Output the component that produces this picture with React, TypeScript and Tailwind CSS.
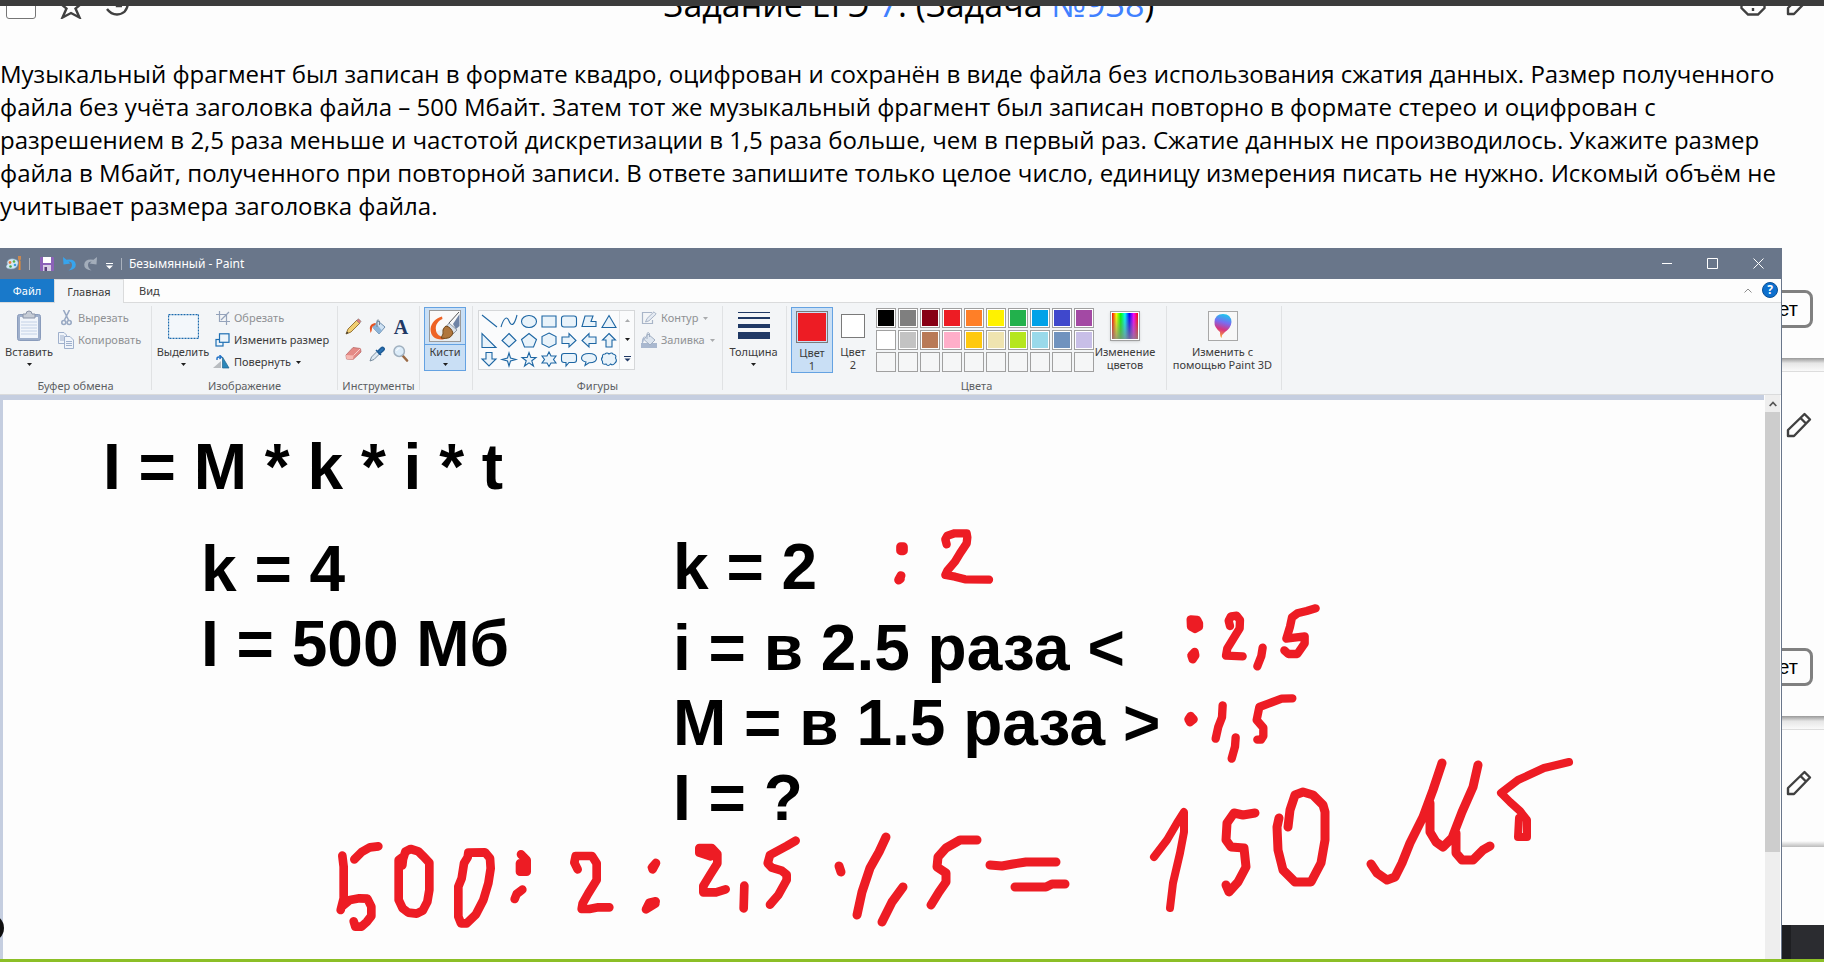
import React from "react";

type Kids = { children?: React.ReactNode };

const Caret = ({ muted = false }: { muted?: boolean }) => (
  <svg width="5" height="3" viewBox="0 0 5 3" className={muted ? "text-[#a9abad]" : "text-[#1e1e1e]"} aria-hidden="true">
    <path d="M0 0H5L2.5 3Z" fill="currentColor" />
  </svg>
);

const Pencil = () => (
  <svg width="26" height="26" viewBox="0 0 26 26" fill="none" stroke="#404040" strokeWidth="2.4" strokeLinejoin="round" aria-hidden="true">
    <path d="M2 24V18L18.5 2L24 7.5L8 24ZM14.5 6L20 11.5" />
  </svg>
);

const Group = ({ label, className, children }: Kids & { label?: string; className: string }) => (
  <section className={`flex shrink-0 ${className}`}>
    <div className="flex min-w-0 grow flex-col">
      <div className="flex h-[73px] pt-px">{children}</div>
      <div className="text-center leading-[13px] whitespace-nowrap text-[#5c5f63]">{label}</div>
    </div>
    <span className="mb-1 w-px shrink-0 bg-[#e0e2e4]" />
  </section>
);

const BigButton = ({ icon, lines, caret, className }: { icon: React.ReactNode; lines: string[]; caret?: boolean; className: string }) => (
  <button className={`flex h-[66px] shrink-0 flex-col items-center leading-[13px] text-[#3b3b3b] ${className}`}>
    <span className="flex h-[38px] items-center">{icon}</span>
    {lines.map((l) => (
      <span key={l} className="whitespace-nowrap">{l}</span>
    ))}
    {caret && <span className="mt-[5px] flex"><Caret /></span>}
  </button>
);

const Row = ({ icon, text, muted, caret }: { icon: React.ReactNode; text: string; muted?: boolean; caret?: boolean }) => (
  <button className={`flex h-[22px] items-center whitespace-nowrap ${muted ? "text-[#8f9194]" : "text-[#3b3b3b]"}`}>
    <span className="flex w-5 items-center">{icon}</span>
    {text}
    {caret && <span className="ml-[5px] flex"><Caret muted={muted} /></span>}
  </button>
);

const PasteIcon = () => (
  <svg width="26" height="32" viewBox="0 0 26 32" aria-hidden="true">
    <rect x="1.5" y="4.5" width="23" height="26" rx="2" fill="#9fb0cc" stroke="#8a9cbc" />
    <rect x="4" y="7" width="18" height="21" fill="#f1f5fb" />
    <path d="M5 12H21M5 15H21M5 18H21M5 21H21M5 24H21" stroke="#c3d1e6" />
    <path d="M7 8V4H10Q10 1 13 1T16 4H19V8Z" fill="#c6ccd6" stroke="#8a94a8" />
  </svg>
);
const CutIcon = () => (
  <svg width="16" height="16" viewBox="0 0 16 16" fill="none" stroke="#99a9c3" strokeWidth="1.6" className="ml-px" aria-hidden="true">
    <path d="M4.5 0L9.5 10M10.5 0L5.5 10" />
    <circle cx="4.8" cy="12.5" r="2" /><circle cx="10.2" cy="12.5" r="2" />
  </svg>
);
const CopyIcon = () => (
  <svg width="16" height="17" viewBox="0 0 16 17" fill="#f0f4fa" stroke="#9fb0cc" aria-hidden="true">
    <path d="M.5.5H6L8.5 3V11.5H.5Z" /><path d="M2 4H6M2 6H6M2 8H6" />
    <path d="M6.5 4.5H12L15.5 8V16.5H6.5Z" /><path d="M8 9.5H14M8 11.5H14M8 13.5H14" />
  </svg>
);
const SelectIcon = () => (
  <svg width="31" height="25" viewBox="0 0 31 25" aria-hidden="true">
    <rect x=".5" y=".5" width="30" height="24" fill="#f3f7fb" stroke="#1b6aae" strokeWidth="1.3" strokeDasharray="2 1" />
  </svg>
);
const CropIcon = () => (
  <svg width="14" height="14" viewBox="0 0 14 14" fill="none" stroke="#95a3bb" className="ml-[2px]" aria-hidden="true">
    <path d="M3.5 0V10.5H14M0 3.5H10.5V14M5 9L13 1" strokeWidth="1.2" />
  </svg>
);
const ResizeIcon = () => (
  <svg width="15" height="14" viewBox="0 0 15 14" fill="#eef5fb" stroke="#1e6fb3" strokeWidth="1.2" className="ml-px" aria-hidden="true">
    <rect x="1" y="6.5" width="7" height="6.5" /><rect x="4.5" y=".8" width="9.5" height="8.5" />
  </svg>
);
const RotateIcon = () => (
  <svg width="17" height="14" viewBox="0 0 17 14" className="-ml-px" aria-hidden="true">
    <path d="M0 13L8 6V13Z" fill="#b8bcc0" /><path d="M9.5 13V2L16 13Z" fill="#2b86b8" stroke="#1c6590" strokeWidth=".7" />
    <path d="M4 5V3.5Q4 2 6 2H8M6.5 0L8.5 2L6.5 4" fill="none" stroke="#2071c7" strokeWidth="1.4" />
  </svg>
);
const DrawPencil = () => (
  <svg width="17" height="17" viewBox="0 0 17 17" aria-hidden="true">
    <path d="M1 16L3 11L12 2L15 5L6 14Z" fill="#f2cf72" stroke="#8d6a2d" strokeWidth=".9" />
    <path d="M11.5 2.5L13.5.8L16 3.3L14.5 5.5Z" fill="#e07b78" stroke="#777" strokeWidth=".6" /><path d="M1 16L2 13.5L3.5 15Z" fill="#333" />
  </svg>
);
const Bucket = () => (
  <svg width="17" height="16" viewBox="0 0 17 16" aria-hidden="true">
    <path d="M9 2L16 8L10 15L4 8.5Z" fill="#cfe2f4" stroke="#6f8fae" /><path d="M7 4.5L13 11.5L10 15L4 8.5Z" fill="#8db4d8" />
    <path d="M8 8V1.5Q9 0 10.5 2V6" fill="none" stroke="#7b8794" /><path d="M6 4Q1 5 .8 9L1.5 14Q3 12 3.2 8L7 5Z" fill="#e6501f" />
  </svg>
);
const TextTool = () => <span className="w-4 text-center font-['Liberation_Serif',serif] text-[20px] leading-4 font-bold text-[#1f3864]">A</span>;
const Eraser = () => (
  <svg width="17" height="15" viewBox="0 0 17 15" aria-hidden="true">
    <path d="M1 9L8 1.5L15.5 2.5L16 6L8 13.5L1.5 13Z" fill="#e58a86" stroke="#b96a68" strokeWidth=".8" />
    <path d="M1 9L8.5 9.5L8 13.5L1.5 13Z" fill="#f7b9b3" /><path d="M8.5 9.5L15.5 2.5" stroke="#f8cfcb" />
  </svg>
);
const Dropper = () => (
  <svg width="16" height="16" viewBox="0 0 16 16" aria-hidden="true">
    <path d="M1 15L2.5 11L8 5.5L10.5 8L5 13.5Z" fill="#dfeaf3" stroke="#6d8295" strokeWidth=".9" />
    <path d="M7 4L12 9M8.5 5.5L12 2Q13.5.8 14.8 2T14 5L10.5 8Z" fill="#2a72b5" stroke="#1f5c96" strokeWidth="1.5" />
  </svg>
);
const Loupe = () => (
  <svg width="16" height="17" viewBox="0 0 16 17" aria-hidden="true">
    <path d="M9.5 10.5L14 15.5" stroke="#9a6a45" strokeWidth="2.6" strokeLinecap="round" />
    <circle cx="6.2" cy="6.2" r="5.2" fill="#dcecf9" stroke="#a0b0bf" strokeWidth="1.5" /><path d="M3.5 6Q4 3.5 6.5 3.5" fill="none" stroke="#fff" />
  </svg>
);
const BrushIcon = () => (
  <svg width="32" height="32" viewBox="0 0 32 32" aria-hidden="true">
    <rect x=".5" y=".5" width="31" height="31" fill="#fafafa" stroke="#9a9a9a" />
    <path d="M1 24L31 12V31H1Z" fill="#e9edf0" />
    <path d="M13 6.500C7 8 2 13 1.500 19C1.500 26 6 30 14 29.500L17 28C11 27 7 24 7 20C6 15 9 11 13.500 9Z" fill="#ee6325" />
    <path d="M24 14L30.5 4V16L27 19Z" fill="#6f84a6" /><path d="M20 13L30 2" stroke="#555" />
    <path d="M20 13L28 20L24 24L17 17Z" fill="#dbe2ea" stroke="#6b7885" strokeWidth=".7" />
    <path d="M17 16Q22 17 24 23Q22 30 12 28Q15 24 14 20Q15 17 17 16Z" fill="#b0763c" stroke="#704516" />
  </svg>
);
const OutlineIcon = () => (
  <svg width="16" height="14" viewBox="0 0 16 14" fill="none" stroke="#a9b5c8" aria-hidden="true">
    <path d="M11 1.5H1.5V12.5H11.5V9" strokeWidth="1.2" /><path d="M4.5 11L6 7.5L13 .8L15.2 3L8 9.8Z" fill="#e4eaf2" />
  </svg>
);
const FillIcon = () => (
  <svg width="16" height="16" viewBox="0 0 16 16" aria-hidden="true">
    <rect y="11" width="16" height="5" fill="#a9b8cf" /><path d="M7 2L14 8L9 13L3 7.5Z" fill="#dde5ef" stroke="#a0aec2" />
    <path d="M6 7V1.5Q7-.5 8.5 1.5V5" fill="none" stroke="#a0aec2" /><path d="M4 4Q0 6 1 12Q3 10 3 7Z" fill="#a9b8cf" />
  </svg>
);

const SHAPES: string[] = [
  "M1 2L16 14",
  "M0 14C3 4 6 3 8 8S13 14 16 2",
  "M8 2.5A7.5 6 0 1 1 8 14.5A7.5 6 0 1 1 8 2.5Z",
  "M1 3H15V14H1Z",
  "M3 3H13Q15.5 3 15.5 5.5V11.5Q15.5 14 13 14H3Q.5 14 .5 11.5V5.5Q.5 3 3 3Z",
  "M4 3H12L10 8.5H15V13.5H1Z",
  "M8 2.5L15 14.5H1Z",
  "M1 1.5V15.5H15Z",
  "M8 1.5L15 8.5L8 15L1 8.5Z",
  "M8 1.5L15.5 7.5L12.5 15H3.5L.5 7.5Z",
  "M8 1L15 4.5V12L8 15.5L1 12V4.5Z",
  "M1 5H8V1.5L15 8.5L8 15V11.5H1Z",
  "M15 5H8V1.5L1 8.5L8 15V11.5H15Z",
  "M8 1.5L14.5 8H11V15H5V8H1.5Z",
  "M5 1.5H11V8H15L8 15L1 8H5Z",
  "M8 2L9.5 7L15 8.5L9.5 10L8 15L6.5 10L1 8.5L6.5 7Z",
  "M8 1.5L9.8 6.5H15L10.8 9.8L12.5 15L8 11.8L3.5 15L5.2 9.8L1 6.5H6.2Z",
  "M8 1L10 5H15L12.5 8.5L15 12H10L8 15.5L6 12H1L3.5 8.5L1 5H6Z",
  "M3 2.5H13Q15.5 2.5 15.5 5V9Q15.5 11.5 13 11.5H8L5 15V11.5H3Q.5 11.5 .5 9V5Q.5 2.5 3 2.5Z",
  "M5 11Q.5 10 .5 7Q1 2.5 8 2.5T15.5 7T8 11.8L4 14.5Z",
  "M4 3Q6 1 8 3Q11 1 12 3Q16 4 14.5 7Q16.5 10 14 12Q12 15 9.5 13Q7 16 5 13Q1 14 1.5 10.5Q-.5 8 1.5 6Q1 3 4 3Z",
];

const PALETTE: string[][] = [
  ["#000000", "#7f7f7f", "#880015", "#ed1c24", "#ff7f27", "#fff200", "#22b14c", "#00a2e8", "#3f48cc", "#a349a4"],
  ["#ffffff", "#c3c3c3", "#b97a57", "#ffaec9", "#ffc90e", "#efe4b0", "#b5e61d", "#99d9ea", "#7092be", "#c8bfe7"],
];

const Palette = () => (
  <div className="mt-px ml-[3px] grid h-16 grid-cols-[repeat(10,20px)] grid-rows-[repeat(3,20px)] gap-[2px]">
    {PALETTE.flat().map((c) => (
      <button key={c} aria-label={c} className="border border-[#a0a0a0] bg-white p-px">
        <span className="block h-full" style={{ backgroundColor: c }} />
      </button>
    ))}
    {Array.from({ length: 10 }, (_, i) => (
      <button key={i} aria-label={`slot ${i + 1}`} className="border border-[#a0a0a0] bg-[#f5f6f7]" />
    ))}
  </div>
);

const TitleBar = () => (
  <header className="flex h-[31px] shrink-0 items-center bg-[#69768a] pl-[6px] text-[12px] text-white">
    <svg width="16" height="17" viewBox="0 0 16 17" aria-hidden="true">
      <path d="M1 7Q3 3 8 4Q13 5 12 9Q11 14 5 14Q0 14 0 11Q2 10 1 7Z" fill="#d3e8f4" stroke="#7fa3bd" strokeWidth=".6" />
      <circle cx="4" cy="7.5" r="1.4" fill="#ee7b3c" /><circle cx="8" cy="6.5" r="1.3" fill="#58b249" />
      <circle cx="9" cy="10" r="1.3" fill="#3c9be0" /><circle cx="4.5" cy="11.5" r="1.3" fill="#46a64b" />
      <path d="M12 1H15V4L14 6H13L12 4Z" fill="#c98952" /><path d="M13 6H14.5V15H12.5Z" fill="#f08c2e" />
    </svg>
    <span className="ml-[7px] h-3 w-px bg-[#a9b1bd]" />
    <button aria-label="Сохранить" className="ml-[10px]">
      <svg width="14" height="14" viewBox="0 0 14 14"><rect width="14" height="14" rx="1" fill="#8b62b8" /><rect x="3" width="8" height="6" fill="#fff" /><rect x="3" y="8" width="8" height="6" fill="#d8cfe5" /><rect x="4.5" y="10" width="2.5" height="4" fill="#59417b" /></svg>
    </button>
    <button aria-label="Отменить" className="ml-[9px]">
      <svg width="13" height="14" viewBox="0 0 13 14"><path d="M0 0L.5 7.5L7.5 6.5L5.3 4.6Q9 4.6 9 8Q9 11 5.5 13.5Q13 12.5 12.8 7.5Q12 1.5 3.5 2.8Z" fill="#37a4ec" /></svg>
    </button>
    <button aria-label="Повторить" className="ml-[8px]">
      <svg width="13" height="14" viewBox="0 0 13 14"><path d="M13 0L12.5 7.5L5.5 6.5L7.7 4.6Q4 4.6 4 8Q4 11 7.5 13.5Q0 12.5 .2 7.5Q1 1.5 9.5 2.8Z" fill="#a3adba" /></svg>
    </button>
    <button aria-label="Настройка панели" className="mt-1 ml-[9px]">
      <svg width="7" height="6" viewBox="0 0 7 6"><path d="M0 .5H7" stroke="#fff" /><path d="M0 2.5H7L3.5 6Z" fill="#fff" /></svg>
    </button>
    <span className="ml-2 h-3 w-px bg-[#a9b1bd]" />
    <h2 className="ml-[7px] grow whitespace-nowrap">Безымянный - Paint</h2>
    <div className="flex shrink-0 items-center">
      <button aria-label="Свернуть" className="grid h-[31px] w-[46px] place-items-center"><svg width="10" height="11" viewBox="0 0 10 11"><path d="M0 5.5H10" stroke="#fff" /></svg></button>
      <button aria-label="Развернуть" className="grid h-[31px] w-[45px] place-items-center"><svg width="11" height="11" viewBox="0 0 11 11"><path d="M.5.5H10.5V10.5H.5Z" stroke="#fff" fill="none" /></svg></button>
      <button aria-label="Закрыть" className="grid h-[31px] w-[46px] place-items-center"><svg width="11" height="11" viewBox="0 0 11 11"><path d="M.5.5L10.5 10.5M10.5.5L.5 10.5" stroke="#fff" /></svg></button>
    </div>
  </header>
);

const Tabs = () => (
  <nav className="flex h-6 shrink-0 items-stretch border-b border-[#dadbdc] bg-[#fdfdfd] pr-[3px] text-[#3b3b3b]">
    <button className="w-[54px] bg-[#1979ca] text-white">Файл</button>
    <button className="-mb-px w-[70px] border-x border-t border-[#dadbdc] bg-[#f3f5f7]">Главная</button>
    <button className="ml-[15px]">Вид</button>
    <span className="grow" />
    <button aria-label="Свернуть ленту" className="mr-[10px]"><svg width="8" height="5" viewBox="0 0 8 5"><path d="M.5 4.5L4 1L7.5 4.5" fill="none" stroke="#8d8d8d" /></svg></button>
    <button aria-label="Справка" className="mt-[3px] grid size-4 place-items-center rounded-full border border-[#0b4f94] bg-[#0c6fce] text-[12px] leading-3 font-bold text-white">?</button>
  </nav>
);

const Ribbon = () => (
  <div className="flex h-[92px] shrink-0 border-b border-[#dadbdc] bg-[#f3f5f7] pt-[3px]">
    <Group label="Буфер обмена" className="w-[152px]">
      <BigButton icon={<PasteIcon />} lines={["Вставить"]} caret className="w-[58px]" />
      <div><Row icon={<CutIcon />} text="Вырезать" muted /><Row icon={<CopyIcon />} text="Копировать" muted /></div>
    </Group>
    <Group label="Изображение" className="w-[186px]">
      <BigButton icon={<SelectIcon />} lines={["Выделить"]} caret className="w-[62px]" />
      <div><Row icon={<CropIcon />} text="Обрезать" muted /><Row icon={<ResizeIcon />} text="Изменить размер" /><Row icon={<RotateIcon />} text="Повернуть" caret /></div>
    </Group>
    <Group label="Инструменты" className="w-[82px]">
      <div className="mt-[11px] grid h-11 w-full grid-cols-3 place-items-center gap-y-[10px] pr-[6px] pl-[3px]">
        <button aria-label="Карандаш"><DrawPencil /></button>
        <button aria-label="Заливка цветом"><Bucket /></button>
        <button aria-label="Текст" className="flex"><TextTool /></button>
        <button aria-label="Ластик"><Eraser /></button>
        <button aria-label="Палитра"><Dropper /></button>
        <button aria-label="Масштаб"><Loupe /></button>
      </div>
    </Group>
    <Group className="w-[53px]">
      <button className="ml-1 flex h-16 w-[42px] flex-col items-center border border-[#64a2e2] bg-[#c9dff5] leading-[13px] text-[#3b3b3b]">
        <span className="flex h-[37px] w-full shrink-0 items-center justify-center border-b border-[#64a2e2]"><BrushIcon /></span>
        Кисти
        <span className="mt-[5px] flex"><Caret /></span>
      </button>
    </Group>
    <Group label="Фигуры" className="w-[250px]">
      <div className="mt-[3px] ml-[5px] flex h-[60px] w-[157px] shrink-0 border border-[#d5d7d9] bg-[#fafbfc]">
        <div className="grid w-[141px] grid-cols-7 grid-rows-3 place-items-center border-r border-[#e3e5e7]">
          {SHAPES.map((d) => (
            <button key={d} aria-label="Фигура">
              <svg width="16" height="16" viewBox="0 0 16 16" className="block overflow-visible"><path d={d} fill={d === SHAPES[0] || d === SHAPES[1] ? "none" : "#e9f3fa"} stroke="#1d66a3" strokeWidth="1.1" /></svg>
            </button>
          ))}
        </div>
        <div className="grid grow grid-rows-3 place-items-center">
          <button aria-label="Вверх" className="rotate-180"><Caret muted /></button>
          <button aria-label="Вниз"><Caret /></button>
          <button aria-label="Все фигуры"><svg width="7" height="6" viewBox="0 0 7 6"><path d="M0 .5H7" stroke="#1f3864" /><path d="M.5 2.5H6.5L3.5 5.5Z" fill="#1f3864" /></svg></button>
        </div>
      </div>
      <div className="ml-[6px]"><Row icon={<OutlineIcon />} text="Контур" muted caret /><Row icon={<FillIcon />} text="Заливка" muted caret /></div>
    </Group>
    <Group className="w-16">
      <BigButton
        icon={<svg width="32" height="28" viewBox="0 0 32 28"><path d="M0 0H32V1H0ZM0 5H32V7H0ZM0 12H32V16H0ZM0 20H32V27H0Z" fill="#1f3864" /></svg>}
        lines={["Толщина"]} caret className="w-[61px]" />
    </Group>
    <Group label="Цвета" className="w-[380px]">
      <BigButton icon={<span className="size-8 border border-[#7a7a7a] bg-[#c9dff5] p-px"><span className="block h-full bg-[#ed1c24]" /></span>} lines={["Цвет", "1"]} className="ml-1 w-[42px] border border-[#64a2e2] bg-[#c9dff5]" />
      <BigButton icon={<span className="size-6 border border-[#7a7a7a] bg-white" />} lines={["Цвет", "2"]} className="w-10" />
      <Palette />
      <BigButton
        icon={
          <span className="border border-[#a0a0a0] bg-white p-px shadow-sm">
            <span className="block size-[26px] bg-[linear-gradient(to_bottom,transparent,#888c),linear-gradient(to_right,#f00,#ff0,#0f0,#0ff,#00f,#f0f,#f00)]" />
          </span>
        }
        lines={["Изменение", "цветов"]} className="w-[62px]" />
    </Group>
    <Group className="w-[115px]">
      <BigButton
        icon={
          <svg width="30" height="30" viewBox="0 0 30 30">
            <defs><linearGradient id="pin" x1=".6" y1="0" x2=".4" y2="1"><stop offset="0" stopColor="#18c8ee" /><stop offset=".35" stopColor="#7a6cf0" /><stop offset=".65" stopColor="#d8357f" /><stop offset="1" stopColor="#ffb02e" /></linearGradient></defs>
            <rect x=".5" y=".5" width="29" height="29" fill="#f8f8f8" stroke="#a8a8a8" />
            <path d="M15 3Q23 3 23.5 11Q23 17 17 21Q14 23 13.5 27Q12 26 12 21Q6 16 6.5 11Q7 3 15 3Z" fill="url(#pin)" />
          </svg>
        }
        lines={["Изменить с", "помощью Paint 3D"]} className="w-[111px]" />
    </Group>
  </div>
);

const Ink = () => (
  <svg className="absolute top-0 left-0 h-[559px] w-[1761px]" viewBox="3 400 1761 559" fill="none" stroke="#ed1c24" strokeWidth="9" strokeLinecap="round" strokeLinejoin="round" role="img" aria-label="Рукописное решение">
    <g transform="translate(860 500) scale(.33333)" strokeWidth="25">
      <path d="M122 140H130V152H122ZM123 227L116 240L121 236" strokeWidth="27" />
      <path d="M260 133L256 118L262 107L284 100H320L322 112L320 130L300 160L285 185L262 212L256 225L285 230L315 238L387 239" />
      <path d="M992 358L1012 360L1017 370V380L1005 387L993 380ZM1005 362L1003 378M1004 456L1006 466L998 478L994 466Z" />
      <path d="M1110 378L1106 362L1113 349L1130 347L1140 360L1139 385L1120 416L1102 445L1098 467L1148 469M1208 443L1204 468L1192 499" />
      <path d="M1367 325L1340 333L1312 340L1296 352L1290 380L1279 416L1334 409V430L1312 462H1285L1273 451" />
      <path d="M985 658L992 648L1001 658L990 667ZM1088 616L1086 652L1075 680L1067 716M1127 712L1125 740L1115 776" />
      <path d="M1297 595L1265 596L1225 611L1198 621L1190 660L1210 683V708L1203 719H1192" />
    </g>
    <g transform="translate(310 800) scale(.33333)" strokeWidth="26">
      <path d="M97 167L101 200V295L92 330M98 318L120 300L148 295L172 296L184 320V348L170 366L154 380H136L131 364M133 178L155 156L180 142L205 139" />
      <path d="M277 196L279 178L286 155L302 147L325 154L340 169L358 188V270L352 305L338 332L320 341L295 338L278 325L266 300V180L277 172" />
      <path d="M475 158L525 157L540 175L542 205L535 250L520 300L498 343L470 370H453L445 350V260L455 235L462 190L473 172Z" />
      <path d="M633 163L650 180V215H630V190L645 198M637 269L620 282L614 297" />
      <path d="M803 208L793 188L797 168H846L860 190V240L835 280L818 310L815 327H838L865 322H898" />
      <path d="M1038 189L1026 202L1028 208ZM1037 304L1018 308L1008 328L1036 311" />
      <path d="M1202 169L1168 158V144H1205L1222 162V190L1200 225L1180 258V277H1218L1247 268M1172 150L1212 162M1303 257L1301 325" />
      <path d="M1457 122L1430 138L1380 165L1373 190L1385 203L1415 212L1430 224V240L1405 285L1380 314" />
    </g>
    <g>
      <path d="M839 866L841 872M886 837L879 852L870 868L862 892L857 915M903 887L892 902L882 922" />
      <path d="M977 840H960L946 848L938 857L937 867L946 873V882L939 892L931 905M990 865L1002 866L1013 864L1026 862H1056M1015 887H1046L1052 884H1065" />
      <path d="M1154 857L1167 840L1177 823L1184 812V832L1180 853L1173 883L1170 908" strokeWidth="8" />
      <path d="M1255 813L1243 815L1234 813L1227 823L1226 840L1231 847L1244 848L1246 867L1238 882L1229 892L1226 885" />
      <path d="M1288 827L1290 810L1295 795L1303 792L1313 795L1323 805L1325 812V840L1321 863L1311 882H1295L1283 870L1278 850L1277 827L1279 818" />
      <path d="M1371 864L1377 873L1387 880L1395 877L1402 863L1410 843L1423 817L1433 790L1442 763M1430 803V832L1436 842L1443 847L1452 838L1462 812L1473 787L1478 765M1456 833V853L1462 860H1473L1483 850L1490 846" />
      <path d="M1569 762L1544 768L1518 780L1501 793L1510 802L1520 811L1527 820V837H1518L1519 818" strokeWidth="8" />
    </g>
  </svg>
);

const PaintWindow = () => (
  <div className="absolute top-[248px] right-[42px] bottom-[3px] left-0 flex flex-col overflow-hidden border-r border-[#69768a] bg-[#fdfdfd] font-['Noto_Sans',sans-serif] text-[11px] leading-4">
    <TitleBar />
    <Tabs />
    <Ribbon />
    <div className="flex min-h-0 grow pr-px">
      <div className="relative min-w-0 grow border-t-[5px] border-l-[3px] border-[#c5cee0] bg-[#fdfdfd] font-['Liberation_Sans',Arial,sans-serif] text-[64px] leading-[75px] font-bold text-black">
        <div className="absolute top-[30px] left-[100px] whitespace-nowrap">I = M * k * i * t</div>
        <div className="absolute top-[132px] left-[198px] whitespace-nowrap">k = 4<br />I = 500 Мб</div>
        <div className="absolute top-[130px] left-[670px] whitespace-nowrap">k = 2</div>
        <div className="absolute top-[211px] left-[670px] whitespace-nowrap">i = в 2.5 раза &lt;<br />М = в 1.5 раза &gt;<br />I = ?</div>
        <Ink />
      </div>
      <div className="ml-px flex w-[15px] shrink-0 flex-col bg-[#eeeeee]">
        <button aria-label="Прокрутить вверх" className="grid h-[17px] place-items-center"><svg width="8" height="6" viewBox="0 0 8 6"><path d="M.7 5L4 1.5L7.3 5" fill="none" stroke="#555" strokeWidth="1.8" /></svg></button>
        <div className="h-[78%] bg-[#cdcdcd]" />
      </div>
    </div>
  </div>
);

const AnswerButton = () => (
  <button className="h-[38px] rounded-[8px] border-[3px] border-[#808080] px-3 font-['Liberation_Sans',Arial,sans-serif] text-[20px] leading-8">Ответ</button>
);

const Divider = () => <div className="h-[14px] shrink-0 border-b border-[#dddddd] bg-linear-to-b from-[#999999] via-[#e6e6e6] via-40% to-[#fafafa]" />;

export default function App() {
  return (
    <main className="relative flex min-h-screen flex-col overflow-hidden bg-[#fdfdfd] font-['Open_Sans','Noto_Sans',sans-serif] text-black">
      <div className="z-10 h-[6px] shrink-0 bg-[#3c3c3c]" />
      <article className="flex h-[352px] shrink-0 flex-col">
        <header className="-mt-[22px] grid h-9 shrink-0 grid-cols-[1fr_auto_1fr] items-end pr-3 pl-[6px]">
          <div className="flex items-end">
            <input type="checkbox" aria-label="Решено" className="mb-px size-[30px] appearance-none rounded-[3px] border border-[#767676] bg-white" />
            <svg width="22" height="24" viewBox="0 0 22 24" fill="none" stroke="#404040" strokeWidth="2.4" className="mb-px ml-6" aria-hidden="true">
              <path d="M11 2L14 9H21L15.5 13.5L19.5 22.5L11 18L2.5 22.5L6.5 13.5L1 9H8Z" />
            </svg>
            <svg width="26" height="26" viewBox="0 0 26 26" fill="none" stroke="#404040" strokeWidth="2.4" className="mb-1 ml-[22px]" aria-hidden="true">
              <path d="M3 19Q7 24.5 13 24.5Q23 24 24 13Q23 3 13 2Q6 2 3 8" /><path d="M13 8V16H18" /><path d="M.5 14H4" />
            </svg>
          </div>
          <h1 className="-mb-1 text-[34px] leading-10">Задание ЕГЭ <a href="#7" className="text-[#4080ff]">7</a>. (Задача <a href="#938" className="text-[#4080ff]">№938</a>)</h1>
          <div className="mb-1 flex items-end justify-end gap-5">
            <svg width="26" height="26" viewBox="0 0 26 26" fill="none" stroke="#404040" strokeWidth="2.4" aria-hidden="true">
              <path d="M8 2H18L24.5 8V18L18 24.5H8L1.5 18V8ZM13 7V15M13 18V21" />
            </svg>
            <Pencil />
          </div>
        </header>
        <p className="mt-[37px] pr-[34px] text-[24px] leading-[33px]">
          Музыкальный фрагмент был записан в формате квадро, оцифрован и сохранён в виде файла без использования сжатия данных. Размер полученного файла без учёта заголовка файла – 500 Мбайт. Затем тот же музыкальный фрагмент был записан повторно в формате стерео и оцифрован с разрешением в 2,5 раза меньше и частотой дискретизации в 1,5 раза больше, чем в первый раз. Сжатие данных не производилось. Укажите размер файла в Мбайт, полученного при повторной записи. В ответе запишите только целое число, единицу измерения писать не нужно. Искомый объём не учитывает размера заголовка файла.
        </p>
        <div className="mt-auto flex justify-end pr-[11px] pb-[30px]"><AnswerButton /></div>
      </article>
      <Divider />
      <article className="flex h-[344px] shrink-0 flex-col items-end justify-between pt-10 pr-[11px] pb-[30px]">
        <span className="mr-px"><Pencil /></span>
        <AnswerButton />
      </article>
      <Divider />
      <article className="flex h-[117px] shrink-0 flex-col items-end justify-between pt-10">
        <span className="mr-3"><Pencil /></span>
        <div className="h-[6px] w-full bg-linear-to-b from-[#fdfdfd] to-[#bbbbbb]" />
      </article>
      <div className="h-[78px] shrink-0" />
      <footer className="min-h-[34px] grow bg-[#2b2c30] pl-[1782px]"><div className="h-[34px] w-[9px] bg-[#1e1f22]" /></footer>
      <PaintWindow />
      <div className="absolute bottom-5 -left-6 size-7 rounded-full bg-[#101010]" />
      <div className="z-10 h-[3px] shrink-0 bg-[#8cbf26]" />
    </main>
  );
}
